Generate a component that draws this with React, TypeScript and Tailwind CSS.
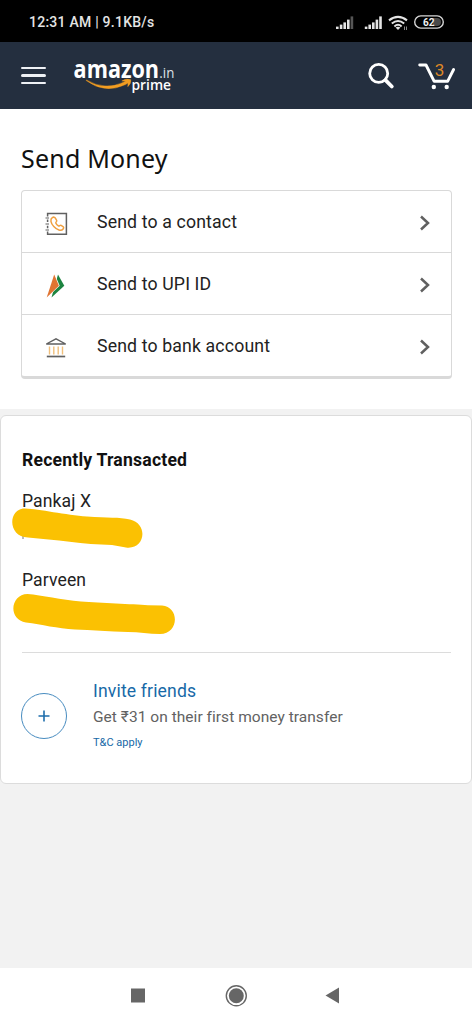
import type { ReactNode } from "react";

function StatusBar() {
  return (
    <div className="flex h-[42px] items-center justify-between bg-black pr-[27px] pl-[29px] text-[#e4e4e4]">
      <span className="mt-[3px] text-[14px] font-medium tracking-[0.24px] whitespace-nowrap">
        12:31 AM | 9.1KB/s
      </span>
      <svg width="110" height="18" viewBox="0 0 110 18" className="mt-[3px]">
        {/* SIM 1 */}
        <g fill="#e4e4e4">
          <rect x="1" y="12.6" width="2.6" height="2.4" />
          <rect x="4.8" y="10.6" width="2.6" height="4.4" />
          <rect x="8.4" y="8.4" width="2.6" height="6.600" />
          <rect x="12" y="5.600" width="2.6" height="9.400" />
          <rect x="15.600" y="2.4" width="2.6" height="12.6" fill="#555" />
        </g>
        {/* SIM 2 */}
        <g fill="#e4e4e4">
          <rect x="29.8" y="12.6" width="2.6" height="2.4" />
          <rect x="33.4" y="10.6" width="2.6" height="4.4" />
          <rect x="37" y="8.4" width="2.6" height="6.600" />
          <rect x="40.6" y="5.600" width="2.6" height="9.400" />
          <rect x="44.2" y="2.4" width="2.6" height="12.6" />
        </g>
        {/* wifi */}
        <g fill="none" stroke="#e4e4e4" strokeWidth="2">
          <path d="M54 6.4Q63 -.6 72 6.4" />
          <path d="M56.8 9.600Q63 4.400 69.2 9.600" />
          <path d="M59.4 12.400Q63 9.200 66.6 12.400" />
        </g>
        <path d="M60.6 13.6Q63 12 65.400 13.6L63 16z" fill="#e4e4e4" />
        <path d="M69.500 12.500v3.500M71.500 12.500v3.500" stroke="#999" strokeWidth=".9" fill="none" />
        {/* battery */}
        <rect x="79.7" y="1.900" width="28.6" height="12.200" rx="6.100" fill="none" stroke="#d6d6d6" strokeWidth="1.4" />
        <path d="M98 4h4a4 4 0 0 1 0 8h-4z" fill="#4a4a4a" />
        <text x="88" y="12" fontSize="11" fontWeight="700" fill="#f2f2f2" textLength="11.500" lengthAdjust="spacingAndGlyphs">
          62
        </text>
      </svg>
    </div>
  );
}

function Logo() {
  return (
    <svg width="104" height="42" viewBox="72 50 104 42" className="-mt-1">
      <text x="73.600" y="74.800" fontFamily="'Open Sans', sans-serif" fontSize="24.500" fontWeight="700" fill="#fff" textLength="85.500" lengthAdjust="spacingAndGlyphs">
        amazon
      </text>
      <text x="159.3" y="74.800" fontFamily="'Open Sans', sans-serif" fontSize="14.5" fill="#dfe2e6" textLength="15" lengthAdjust="spacingAndGlyphs">
        .in
      </text>
      <path d="M86.400 76.900Q105 88 123.500 79.300L125.600 78.200L121.800 78Q126 74.900 130.800 76.700Q131.300 80.500 127.800 83.700L128 80.100L125.500 81.600Q105 91.500 86.200 77.600z" fill="#f29d21" stroke="#f29d21" strokeWidth=".4" />
      <text x="131.5" y="87.300" fontFamily="'Open Sans', sans-serif" fontSize="14" fontWeight="600" fill="#fff" textLength="39.5" lengthAdjust="spacingAndGlyphs">
        prime
      </text>
    </svg>
  );
}

function Header() {
  return (
    <header className="flex h-[67px] items-center bg-[#242f3f]">
      <button className="ml-[21px] flex w-[25px] flex-col gap-[5px]">
        <span className="h-[2.5px] rounded bg-[#eef1f5]" />
        <span className="h-[2.5px] rounded bg-[#eef1f5]" />
        <span className="h-[2.5px] rounded bg-[#eef1f5]" />
      </button>
      <div className="ml-[26px]">
        <Logo />
      </div>
      <svg width="96" height="34" viewBox="364 59 96 34" className="mr-3 ml-auto" fill="none" stroke="#fff">
        <circle cx="378.7" cy="73.4" r="9" strokeWidth="2.8" />
        <path d="M385.5 80.2l6.3 6.3" strokeWidth="3.8" strokeLinecap="round" />
        <path d="M419.7 65h6.3l8.200 16.3h13.4l6-11.8" strokeWidth="2.900" strokeLinecap="round" strokeLinejoin="round" />
        <circle cx="433.8" cy="87" r="2.2" fill="#fff" stroke="none" />
        <circle cx="446.7" cy="87" r="2.2" fill="#fff" stroke="none" />
        <text x="434.800" y="76.300" fontSize="17" fill="#df8826" stroke="none">
          3
        </text>
      </svg>
    </header>
  );
}

const ContactIcon = () => (
  <svg width="24" height="24" viewBox="0 0 24 24" fill="none">
    <path d="M3.600 4.500V1.500h18.800v20.800H3.600v-2.800M3.600 7.500v2.500M3.600 13.800v2.500" stroke="#606060" strokeWidth="1.5" />
    <path d="M1.500 6h3.500M1.500 12h3.500M1.500 18h3.500" stroke="#606060" strokeWidth="1.2" />
    <path d="M8.3 5.6c-2.4 1.5-1.7 5.5 1.5 8.9 3.2 3.5 7.4 5 9.3 2.5.8-1 .7-1.8-.1-2.4l-1.9-1.2c-1-.6-1.5.9-2.5.6-1.3-.6-2.3-1.700-2.800-3-.3-1 1.300-1.300.9-2.500l-1.200-2.200c-.7-1.300-1.900-1.500-3.200-.7z" stroke="#f0a040" strokeWidth="1.5" />
  </svg>
);

const UpiIcon = () => (
  <svg width="24" height="24" viewBox="0 0 24 24">
    <path d="M14 .5l6.300 11.300L7.500 23.500z" fill="#1c8440" />
    <path d="M10.900 .5l4.800 11.300L3.200 23.500z" fill="#fff" />
    <path d="M10.200 .5l4.700 11.300L2.700 23.500z" fill="#e07432" />
  </svg>
);

const BankIcon = () => (
  <svg width="24" height="24" viewBox="0 0 24 24" fill="none">
    <path d="M2.3 8L12 2.900l9.700 5.100z" stroke="#606060" strokeWidth="1.4" />
    <path d="M5.5 10.500v8M9.800 10.500v8M14.200 10.500v8M18.500 10.500v8" stroke="#f1bf7a" strokeWidth="1.4" />
    <path d="M2.800 20.500h18.400" stroke="#606060" strokeWidth="1.7" />
  </svg>
);

function OptionRow({ icon, label }: { icon: ReactNode; label: string }) {
  return (
    <button className="flex h-[62px] w-full items-center border-b border-[#d9d9d9] pr-5 pl-[22px] last:h-[61px] last:border-b-0">
      <span className="mt-1">{icon}</span>
      <span className="mt-0.5 ml-[29px] text-[17.7px] tracking-[0.14px] text-[#222]">{label}</span>
      <svg width="12" height="18" viewBox="0 0 12 18" className="mt-0.5 ml-auto" fill="none">
        <path d="M2 2.5l7 6.5-7 6.5" stroke="#606060" strokeWidth="2.5" />
      </svg>
    </button>
  );
}

function RecentlyTransacted() {
  return (
    <div className="relative pt-8">
      <h2 className="text-[17.6px] leading-6 font-bold tracking-[0.2px] text-[#111]">Recently Transacted</h2>
      <p className="mt-[17px] text-[17.6px] leading-6 tracking-[0.1px] text-[#222]">Pankaj X</p>
      <p className="mt-[55px] text-[17.6px] leading-6 tracking-[0.1px] text-[#222]">Parveen</p>
      {/* hidden account details */}
      <svg width="180" height="140" viewBox="10 500 180 140" className="pointer-events-none absolute top-[84px] -left-[12px]" fill="#fbc102">
        <path d="M23 536v3" stroke="#777" />
        <path d="M25 508.5C39 509 66 515 87 516.5S119 517 130 519.5C149 524 145 550 126 547.5L112 545C84 544.5 55 539.5 28 537.5C7 537 8 508 25 508.5z" />
        <path d="M27.5 594C42 595 61 600 81 601.5S132 604 148 605.3L162 605.5C180 607 179 634 160 634C149 634 139 632 128 632C109 631.5 91 630 75 629.5C57 628.5 42 624.5 26 622.5C7 619 11 594 27.5 594z" />
      </svg>
    </div>
  );
}

function InviteFriends() {
  return (
    <div className="mt-[60px] flex border-t border-[#dcdcdc] pt-[26px]">
      <div className="mt-[14px] -ml-px flex size-[46px] items-center justify-center rounded-full border-[1.5px] border-[#488cc0]">
        <svg width="12" height="12" viewBox="0 0 12 12">
          <path d="M.5 6h11M6 .5v11" stroke="#1e6eac" strokeWidth="1.6" />
        </svg>
      </div>
      <div className="ml-[26px]">
        <p className="text-[17.6px] leading-6 tracking-[0.15px] text-[#1769a7]">Invite friends</p>
        <p className="mt-0.5 text-[15.5px] leading-6 tracking-[0.04px] text-[#626262]">
          Get ₹31 on their first money transfer
        </p>
        <a className="mt-1.5 block text-[11px] leading-4 text-[#1769a7]">T&amp;C apply</a>
      </div>
    </div>
  );
}

export default function App() {
  return (
    <div className="flex h-[1024px] w-[472px] flex-col overflow-hidden bg-[#f2f2f2] font-['Roboto',sans-serif]">
      <StatusBar />
      <Header />
      <section className="h-[300px] bg-white pr-5 pl-[21px] pt-[33px]">
        <h1 className="font-['Noto_Sans',sans-serif] text-[25px] leading-8 tracking-[0.2px] text-[#111]">Send Money</h1>
        <div className="mt-4 rounded border border-b-[3px] border-[#d9d9d9]">
          <OptionRow icon={<ContactIcon />} label="Send to a contact" />
          <OptionRow icon={<UpiIcon />} label="Send to UPI ID" />
          <OptionRow icon={<BankIcon />} label="Send to bank account" />
        </div>
      </section>
      <section className="mt-1.5 h-[369px] rounded-md border-[1.5px] border-[#dcdcdc] bg-white pr-5 pl-[21px]">
        <RecentlyTransacted />
        <InviteFriends />
      </section>
      <nav className="mt-auto flex h-14 items-center justify-center bg-white">
        <svg width="220" height="24" viewBox="126 984 220 24" fill="#666">
          <rect x="131" y="988.5" width="14" height="14" />
          <circle cx="236.3" cy="995.8" r="10" fill="none" stroke="#666" strokeWidth="1.4" />
          <circle cx="236.3" cy="995.8" r="7.5" />
          <path d="M325.5 995.6l13.5-8v16z" />
        </svg>
      </nav>
    </div>
  );
}
